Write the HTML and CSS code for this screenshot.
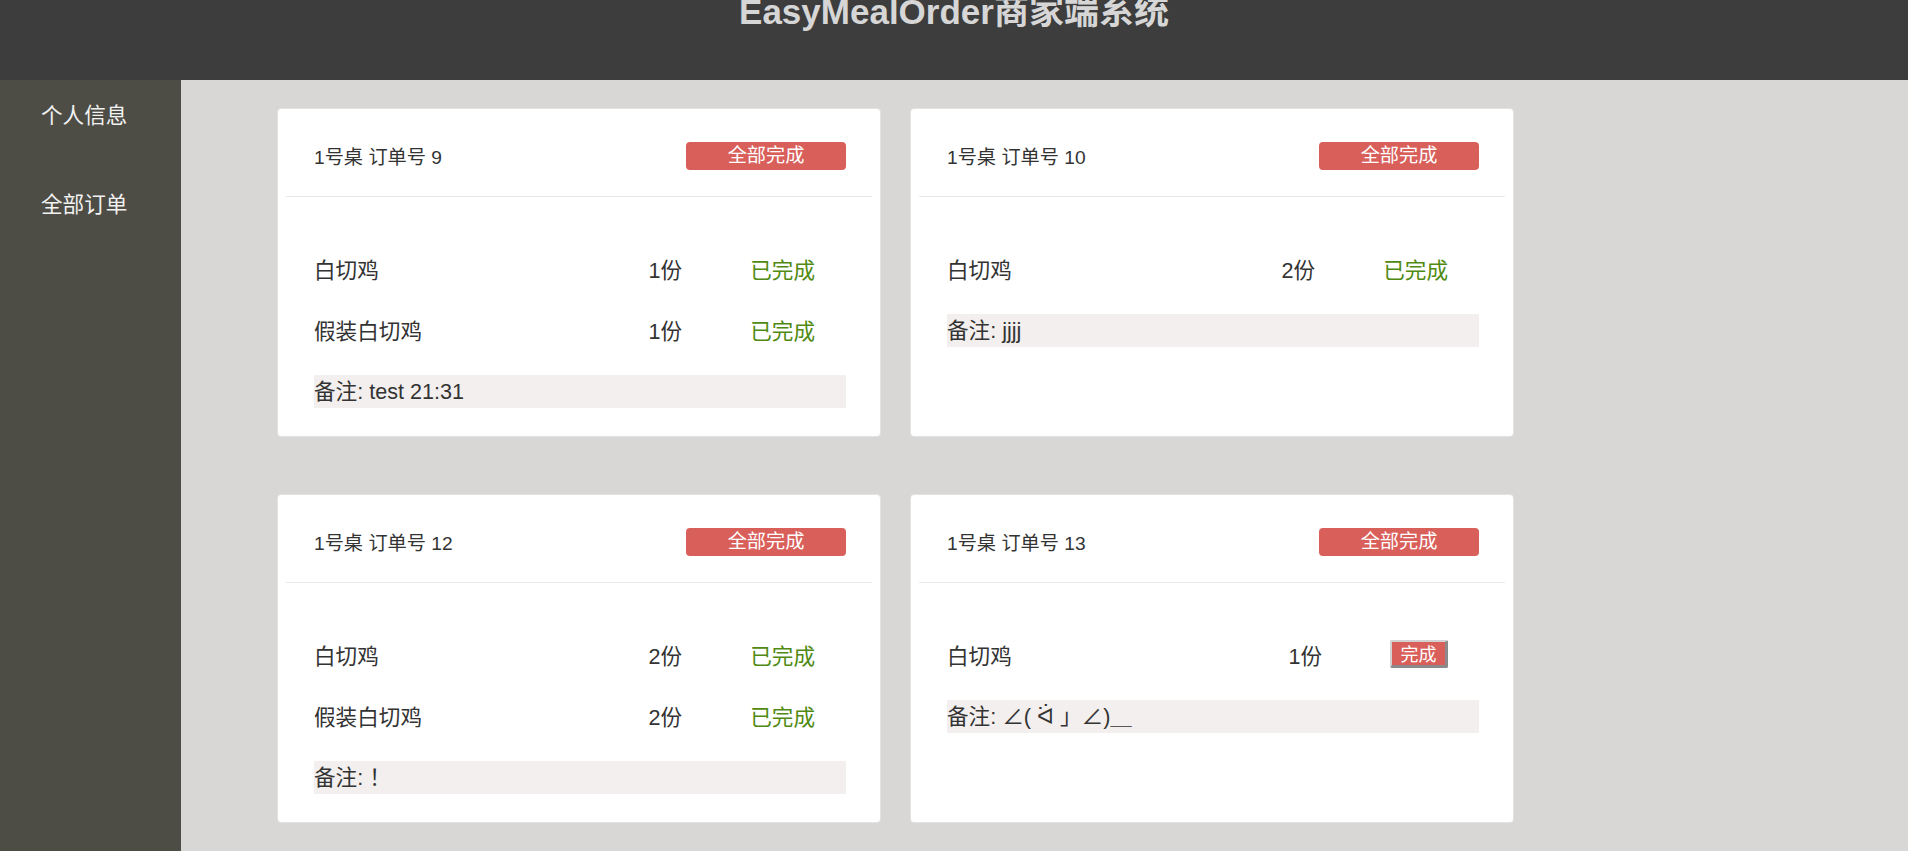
FILE: index.html
```html
<!DOCTYPE html>
<html lang="zh-CN">
<head>
<meta charset="utf-8">
<title>EasyMealOrder商家端系统</title>
<link rel="stylesheet" href="styles.css">
</head>
<body>
<header class="topbar">
  <h1 class="title">EasyMealOrder商家端系统</h1>
</header>
<div class="layout">
  <nav class="sidebar">
    <div class="nav-item">个人信息</div>
    <div class="nav-item">全部订单</div>
  </nav>
  <main class="main">
    <div class="orders">
      <section class="card">
        <div class="card-head">
          <span class="order-title">1号桌 订单号 9</span>
          <button class="btn-all">全部完成</button>
        </div>
        <div class="card-body">
          <div class="item"><span class="name">白切鸡</span><span class="qty">1份</span><span class="status">已完成</span></div>
          <div class="item"><span class="name">假装白切鸡</span><span class="qty">1份</span><span class="status">已完成</span></div>
          <div class="note">备注: test 21:31</div>
        </div>
      </section>
      <section class="card">
        <div class="card-head">
          <span class="order-title">1号桌 订单号 10</span>
          <button class="btn-all">全部完成</button>
        </div>
        <div class="card-body">
          <div class="item"><span class="name">白切鸡</span><span class="qty">2份</span><span class="status">已完成</span></div>
          <div class="note">备注: jjjj</div>
        </div>
      </section>
      <section class="card">
        <div class="card-head">
          <span class="order-title">1号桌 订单号 12</span>
          <button class="btn-all">全部完成</button>
        </div>
        <div class="card-body">
          <div class="item"><span class="name">白切鸡</span><span class="qty">2份</span><span class="status">已完成</span></div>
          <div class="item"><span class="name">假装白切鸡</span><span class="qty">2份</span><span class="status">已完成</span></div>
          <div class="note">备注: ！</div>
        </div>
      </section>
      <section class="card">
        <div class="card-head">
          <span class="order-title">1号桌 订单号 13</span>
          <button class="btn-all">全部完成</button>
        </div>
        <div class="card-body">
          <div class="item"><span class="name">白切鸡</span><span class="qty">1份</span><span class="status"><button class="btn-done">完成</button></span></div>
          <div class="note">备注: ∠( ᐛ 」∠)＿</div>
        </div>
      </section>
    </div>
  </main>
</div>
</body>
</html>
```
FILE: styles.css
```css
* { box-sizing: border-box; }

html, body {
  margin: 0;
  padding: 0;
}

body {
  font-family: "Liberation Sans", "Noto Sans CJK SC", sans-serif;
  color: #333;
  height: 100vh;
  display: flex;
  flex-direction: column;
  overflow: hidden;
}

.topbar {
  height: 80px;
  flex: 0 0 80px;
  background: #3d3d3d;
  text-align: center;
  overflow: hidden;
}

.title {
  margin: -6px 0 0;
  font-size: 35px;
  line-height: 35px;
  font-weight: bold;
  color: #d6d6d6;
}

.layout {
  flex: 1;
  display: flex;
  min-height: 0;
}

.sidebar {
  width: 181px;
  flex: 0 0 181px;
  background: #4d4c45;
  padding: 11px 0 0 41px;
}

.nav-item {
  color: #f2f2f2;
  font-size: 21.6px;
  line-height: 50px;
  margin-bottom: 39px;
}

.main {
  flex: 1;
  background: #d8d7d5;
}

.orders {
  display: grid;
  grid-template-columns: repeat(2, 604px);
  column-gap: 29px;
  row-gap: 57px;
  padding: 28px 0 0 96px;
}

.card {
  background: #fff;
  border: 1px solid #e2e2e2;
  border-radius: 4px;
  display: flex;
  flex-direction: column;
}

.card-head {
  margin: 0 8px;
  padding: 33px 26px 26px 28px;
  border-bottom: 1px solid #e7e9ef;
  display: flex;
  align-items: center;
  justify-content: space-between;
  height: 88px;
}

.order-title {
  font-size: 19.2px;
  color: #333;
}

.btn-all {
  width: 160px;
  height: 28px;
  border: 0;
  border-radius: 4px;
  background: #d95f5b;
  color: #fff;
  font-family: inherit;
  font-size: 19.2px;
  line-height: 28px;
  padding: 0;
}

.card-body {
  padding: 42px 34px 28px 36px;
  flex: 1;
}

.item {
  display: flex;
  align-items: center;
  height: 61px;
  font-size: 21.6px;
  padding: 0 31px 3px 0;
}

.name {
  flex: 1;
}

.status {
  margin-left: 68px;
  color: #508a12;
  display: flex;
  align-items: center;
}

.btn-done {
  width: 58px;
  height: 28px;
  padding: 2px 0 0;
  background: #d95f5b;
  color: #fff;
  font-family: inherit;
  font-size: 18px;
  line-height: 22px;
  border-style: solid;
  border-width: 2px 3px 3px 2px;
  border-color: #d2d2d2 #8a8a8a #8a8a8a #d2d2d2;
  border-radius: 2px;
}

.note {
  margin-top: 14px;
  height: 33px;
  line-height: 33px;
  background: #f2efee;
  font-size: 21.6px;
  white-space: nowrap;
}
```
